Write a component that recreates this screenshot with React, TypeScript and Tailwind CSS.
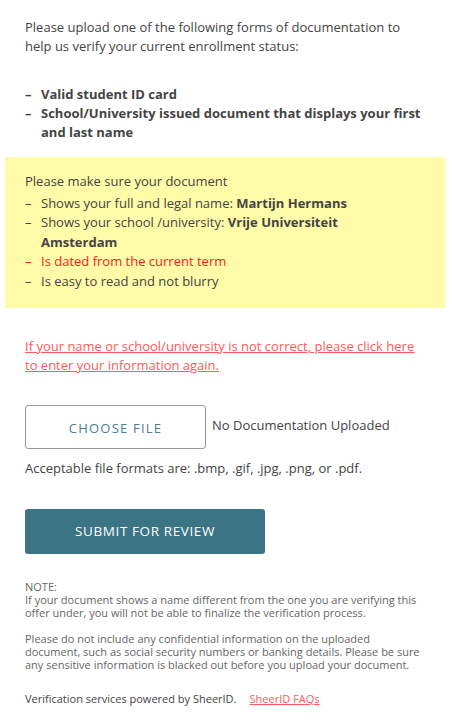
import React from "react";

const Dash = ({ children, className = "" }: { children: React.ReactNode; className?: string }) => (
  <li className={`flex ${className}`}>
    <span className="w-[16px] shrink-0">–</span>
    <span>{children}</span>
  </li>
);

export default function App() {
  return (
    <div
      className="w-[452px] min-h-[728px] bg-white text-[#444] text-[13px] leading-[19px]"
      style={{ fontFamily: '"Open Sans", "Noto Sans", sans-serif' }}
    >
      <div className="ml-[5px] w-[440px] pt-[18px]">
        <p className="px-[20px]">
          Please upload one of the following forms of documentation to help us verify your current enrollment status:
        </p>
        <ul className="px-[20px] mt-[29px] font-bold">
          <Dash>Valid student ID card</Dash>
          <Dash>School/University issued document that displays your first and last name</Dash>
        </ul>
        <div className="mt-[15px] bg-[#fffba8] pl-[20px] pr-[40px] pt-[15px] pb-[17px]">
          <p>Please make sure your document</p>
          <ul className="mt-[3px] leading-[19.4px]">
            <Dash>
              Shows your full and legal name: <b>Martijn Hermans</b>
            </Dash>
            <Dash>
              Shows your school /university: <b>Vrije Universiteit Amsterdam</b>
            </Dash>
            <Dash className="text-[#ff1a1a]">Is dated from the current term</Dash>
            <Dash>Is easy to read and not blurry</Dash>
          </ul>
        </div>
        <div className="px-[20px]">
          <a className="block mt-[29px] text-[#ff5a5a] underline pr-[8px]" href="#">
            If your name or school/university is not correct, please click here to enter your information again.
          </a>
          <div className="mt-[30px] flex items-center">
            <div className="w-[181px] h-[44px] border border-[#9a9a9a] rounded-[3px] flex items-center justify-center text-[#4a8096] tracking-[1.2px] pt-[3px]">
              CHOOSE FILE
            </div>
            <span className="ml-[6px] -mt-[3px]">No Documentation Uploaded</span>
          </div>
          <p className="mt-[10px]">Acceptable file formats are: .bmp, .gif, .jpg, .png, or .pdf.</p>
          <div className="mt-[31px] w-[240px] h-[45px] rounded-[3px] bg-[#3b7585] text-white flex items-center justify-center tracking-[0.6px] text-[13.5px]">
            SUBMIT FOR REVIEW
          </div>
          <div className="mt-[26px] text-[11px] leading-[13px] text-[#666]">
            <p>NOTE:</p>
            <p>
              If your document shows a name different from the one you are verifying this offer under, you will not be able to finalize the verification process.
            </p>
            <p className="mt-[13px]">
              Please do not include any confidential information on the uploaded document, such as social security numbers or banking details. Please be sure any sensitive information is blacked out before you upload your document.
            </p>
            <p className="mt-[21px] text-[#444]">
              Verification services powered by SheerID.
              <a href="#" className="ml-[13px] text-[#ff5a5a] underline">SheerID FAQs</a>
            </p>
          </div>
        </div>
      </div>
    </div>
  );
}
